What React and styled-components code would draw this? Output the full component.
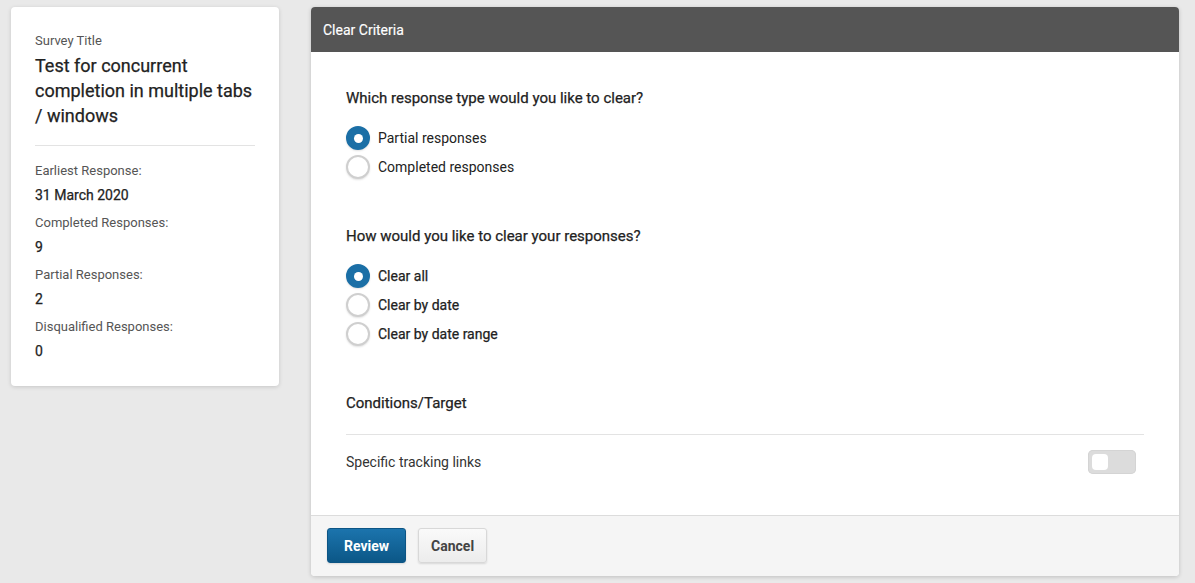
import React from 'react';
import styled, { createGlobalStyle, css } from 'styled-components';

const GlobalStyle = createGlobalStyle`
  html, body {
    margin: 0;
    padding: 0;
    background: #e9e9e9;
    font-family: Roboto, 'Liberation Sans', sans-serif;
    color: #222;
  }
`;

// Roboto here only ships 400/700, so fake the medium weight
const medium = css`
  font-weight: 400;
  -webkit-text-stroke: 0.25px currentColor;
`;

const Page = styled.div`
  display: flex;
  align-items: flex-start;
  gap: 32px;
  padding: 7px 16px 7px 11px;
`;

const SummaryCard = styled.aside`
  width: 268px;
  box-sizing: border-box;
  background: #fff;
  border-radius: 4px;
  box-shadow: 0 1px 4px rgba(0, 0, 0, 0.15);
  padding: 26px 24px 26px;
`;

const Label = styled.div`
  font-size: 13px;
  color: #555;
  line-height: 16px;
`;

const SurveyName = styled.h1`
  margin: 4px 0 0;
  font-size: 18px;
  ${medium}
  line-height: 25px;
  color: #222;
`;

const Divider = styled.hr`
  border: 0;
  border-top: 1px solid #e3e3e3;
  margin: ${p => p.$margin || '17px 0'};
`;

const Stats = styled.dl`
  margin: 0;
  display: flex;
  flex-direction: column;
`;

const StatLabel = styled.dt`
  font-size: 13px;
  color: #555;
  line-height: 16px;
  margin-top: 11px;

  &:first-child {
    margin-top: 0;
  }
`;

const StatValue = styled.dd`
  margin: 7px 0 0;
  font-size: 14px;
  ${medium}
  line-height: 18px;
  color: #222;
`;

const Panel = styled.section`
  flex: 1;
  background: #fff;
  border-radius: 4px;
  box-shadow: 0 1px 4px rgba(0, 0, 0, 0.18);
  overflow: hidden;
`;

const PanelHeader = styled.header`
  height: 45px;
  background: #555555;
  color: #fff;
  font-size: 14px;
  ${medium}
  -webkit-text-stroke-width: 0.15px;
  display: flex;
  align-items: center;
  padding: 0 12px;
`;

const PanelBody = styled.div`
  padding: 37px 35px 41px;
`;

const Question = styled.h2`
  margin: 0 0 19px;
  font-size: 15px;
  ${medium}
  line-height: 18px;
  color: #222;
`;

const RadioGroup = styled.div`
  display: flex;
  flex-direction: column;
  gap: 5px;
  margin-bottom: 48px;
`;

const RadioRow = styled.label`
  display: flex;
  align-items: center;
  gap: 8px;
  font-size: 14px;
  color: #222;
  ${p => (p.$bold ? medium : 'font-weight: 400;')}
`;

const RadioDot = styled.span`
  width: 24px;
  height: 24px;
  box-sizing: border-box;
  border-radius: 50%;
  flex: none;
  display: flex;
  align-items: center;
  justify-content: center;
  background: ${p => (p.$checked ? '#1b6fa6' : '#fff')};
  border: 2px solid ${p => (p.$checked ? '#1b6fa6' : '#cfcfcf')};
  box-shadow: 0 1px 2px rgba(0, 0, 0, 0.12);

  &::after {
    content: '';
    width: 9px;
    height: 9px;
    border-radius: 50%;
    background: #fff;
    display: ${p => (p.$checked ? 'block' : 'none')};
  }
`;

const SectionTitle = styled.h3`
  margin: 0;
  font-size: 15px;
  ${medium}
  line-height: 18px;
`;

const ToggleRow = styled.div`
  display: flex;
  align-items: center;
  justify-content: space-between;
  font-size: 14px;
  color: #333;
  padding-right: 8px;
`;

const Toggle = styled.span`
  width: 48px;
  height: 24px;
  box-sizing: border-box;
  border-radius: 5px;
  background: #dcdcdc;
  padding: 3px;
  box-shadow: inset 0 0 0 1px #d4d4d4;

  &::before {
    content: '';
    display: block;
    width: 16px;
    height: 16px;
    margin: 1px 0 0 1px;
    border-radius: 4px;
    background: #fff;
  }
`;

const PanelFooter = styled.footer`
  background: #f5f5f5;
  border-top: 1px solid #dcdcdc;
  padding: 12px 16px 13px;
  display: flex;
  gap: 12px;
`;

const Button = styled.button`
  height: 35px;
  padding: 0 ${p => (p.$primary ? '16px' : '12px')};
  border-radius: 3px;
  font-family: inherit;
  font-size: 14px;
  font-weight: 700;
  cursor: pointer;
  border: 1px solid ${p => (p.$primary ? '#0c5585' : '#d8d8d8')};
  color: ${p => (p.$primary ? '#fff' : '#444')};
  background: ${p =>
    p.$primary
      ? 'linear-gradient(#1c74ad, #0b5787)'
      : 'linear-gradient(#fafafa, #ececec)'};
  box-shadow: 0 1px 2px rgba(0, 0, 0, 0.12);
`;

const stats = [
  { label: 'Earliest Response:', value: '31 March 2020' },
  { label: 'Completed Responses:', value: '9' },
  { label: 'Partial Responses:', value: '2' },
  { label: 'Disqualified Responses:', value: '0' },
];

const App = () => (
  <>
    <GlobalStyle />
    <Page>
      <SummaryCard>
        <Label>Survey Title</Label>
        <SurveyName>Test for concurrent completion in multiple tabs / windows</SurveyName>
        <Divider />
        <Stats>
          {stats.map(s => (
            <React.Fragment key={s.label}>
              <StatLabel>{s.label}</StatLabel>
              <StatValue>{s.value}</StatValue>
            </React.Fragment>
          ))}
        </Stats>
      </SummaryCard>

      <Panel>
        <PanelHeader>Clear Criteria</PanelHeader>
        <PanelBody>
          <Question>Which response type would you like to clear?</Question>
          <RadioGroup>
            <RadioRow><RadioDot $checked />Partial responses</RadioRow>
            <RadioRow><RadioDot />Completed responses</RadioRow>
          </RadioGroup>

          <Question>How would you like to clear your responses?</Question>
          <RadioGroup>
            <RadioRow $bold><RadioDot $checked />Clear all</RadioRow>
            <RadioRow $bold><RadioDot />Clear by date</RadioRow>
            <RadioRow $bold><RadioDot />Clear by date range</RadioRow>
          </RadioGroup>

          <SectionTitle>Conditions/Target</SectionTitle>
          <Divider $margin="22px 0 15px" />
          <ToggleRow>
            Specific tracking links
            <Toggle />
          </ToggleRow>
        </PanelBody>
        <PanelFooter>
          <Button $primary>Review</Button>
          <Button>Cancel</Button>
        </PanelFooter>
      </Panel>
    </Page>
  </>
);

export default App;
